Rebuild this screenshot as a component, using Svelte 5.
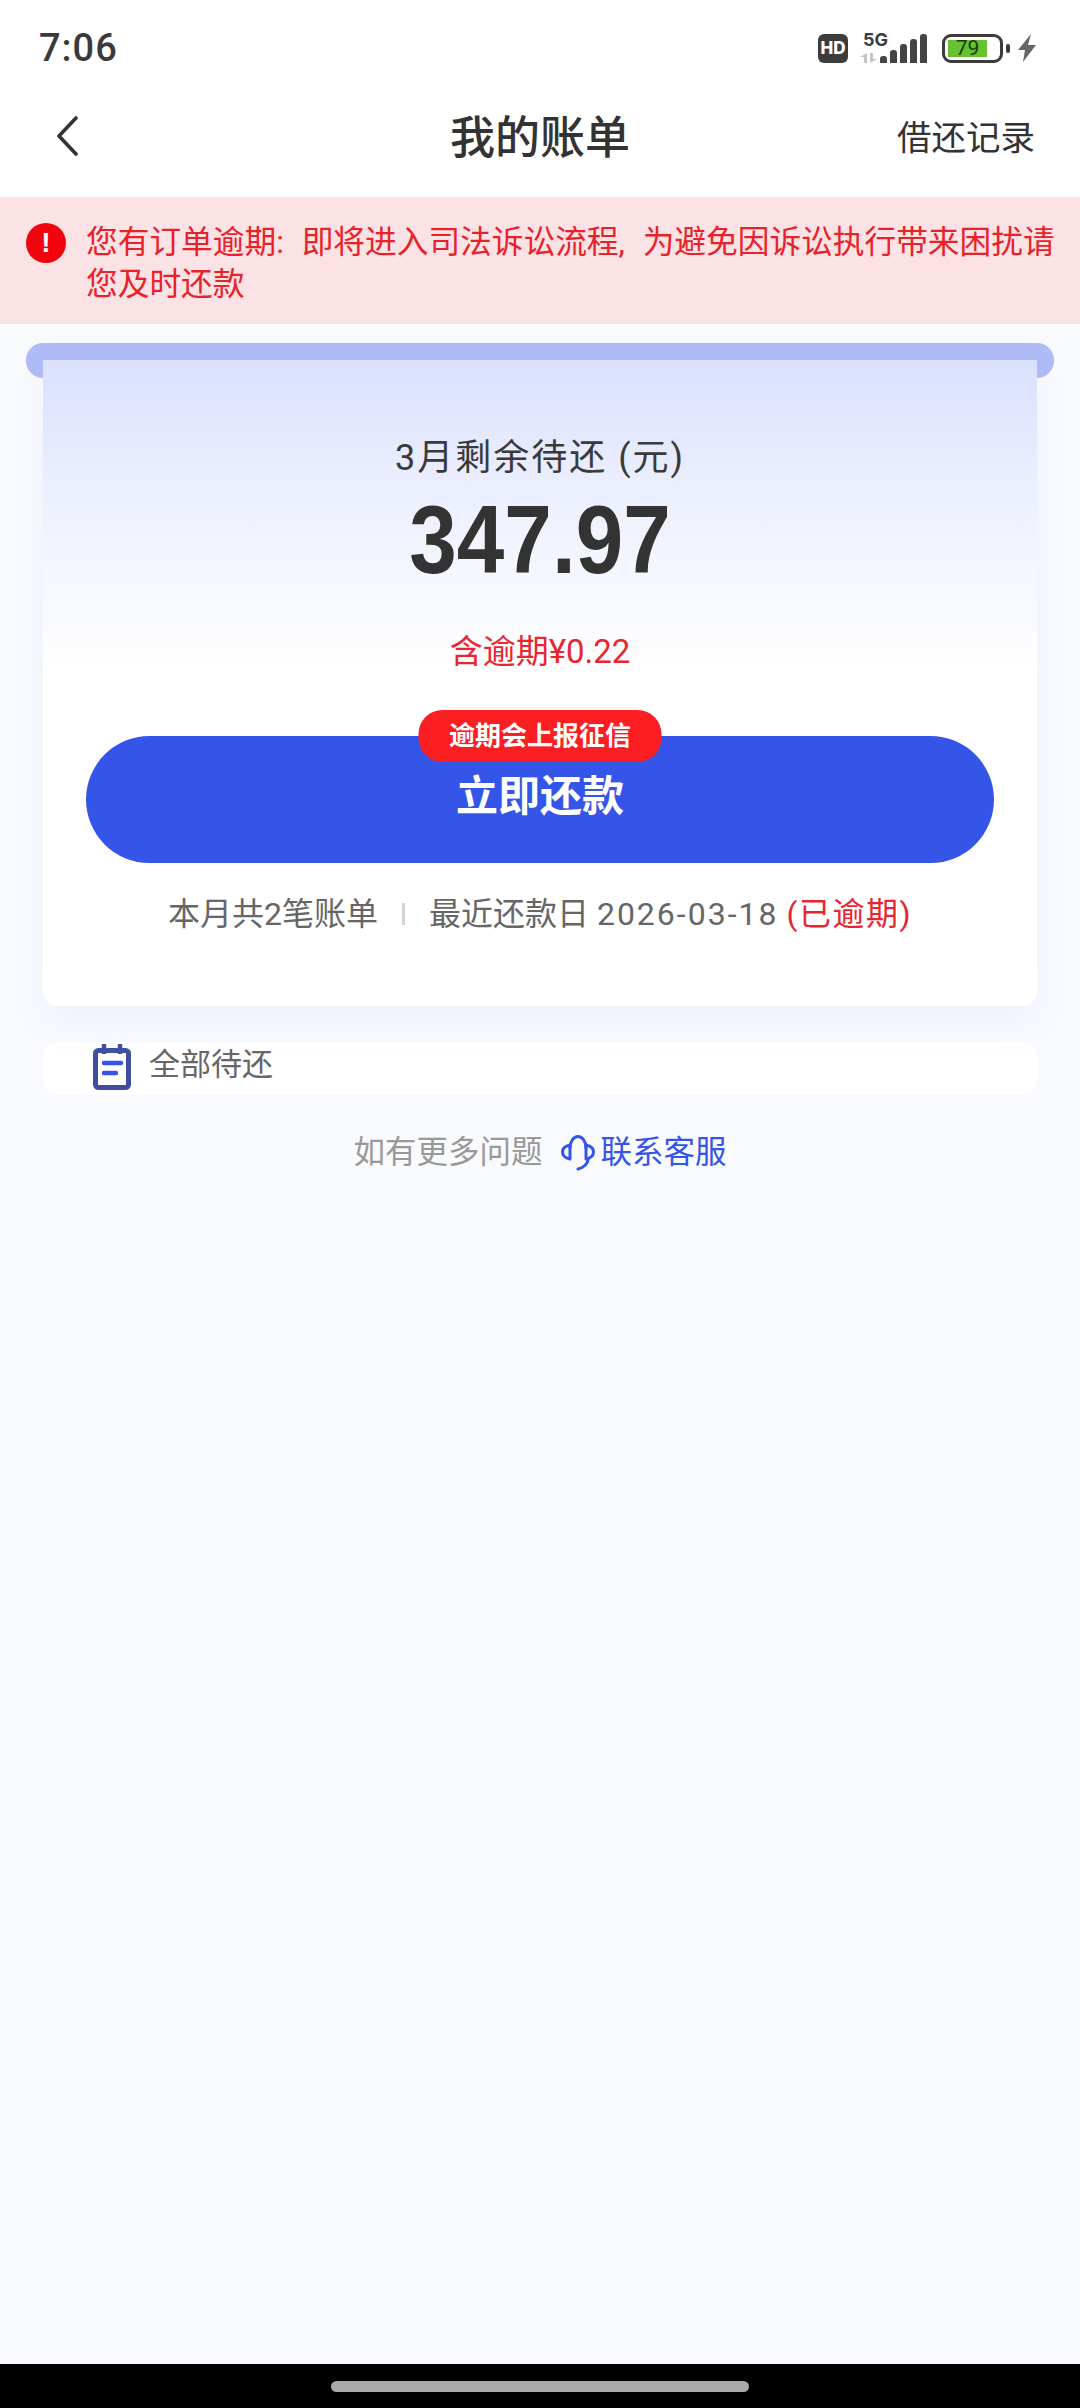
<script lang="ts">
  const bars = [7, 13, 19, 24, 29];
</script>

<div class="page">
  <header class="status">
    <span class="time">7:06</span>
    <div class="status-icons">
      <span class="hd">HD</span>
      <div class="signal">
        <span class="five-g">5G</span>
        <svg class="arrows" width="17" height="10" viewBox="0 0 17 10">
          <path d="M7 0v10H4V4H0zM10 0h3v6h4l-7 4z" fill="#c4c4c4" />
        </svg>
        <div class="bars">
          {#each bars as h}
            <i style="height:{h}px"></i>
          {/each}
        </div>
      </div>
      <div class="battery"><span class="level">79</span></div>
      <i class="battery-cap"></i>
      <svg width="20" height="28" viewBox="0 0 20 28">
        <path d="M14 0 1 16h7L6 28l13-17h-8z" fill="#666" />
      </svg>
    </div>
  </header>

  <nav class="nav">
    <svg class="back" width="24" height="40" viewBox="0 0 24 40">
      <path d="M21 2 4 20l17 18" fill="none" stroke="#333" stroke-width="3.6" stroke-linecap="round" stroke-linejoin="round" />
    </svg>
    <h1>我的账单</h1>
    <a class="records" href="#records">借还记录</a>
  </nav>

  <div class="notice">
    <span class="alert">!</span>
    <p>您有订单逾期: 即将进入司法诉讼流程, 为避免因诉讼执行带来困扰请您及时还款</p>
  </div>

  <main>
    <div class="roller"></div>
    <section class="bill">
      <div class="label">3月剩余待还 (元)</div>
      <div class="amount">347.97</div>
      <div class="overdue">含逾期¥0.22</div>
      <div class="pay-wrap">
        <span class="tag">逾期会上报征信</span>
        <button class="pay">立即还款</button>
      </div>
      <div class="meta">
        <span>本月共2笔账单</span>
        <i class="sep"></i>
        <span>最近还款日 <span class="date">2026-03-18</span></span>
        <span class="late">(已逾期)</span>
      </div>
    </section>

    <section class="pending">
      <svg width="38" height="46" viewBox="0 0 38 46">
        <rect x="2.500" y="6.500" width="33" height="37" rx="3" fill="#fff" stroke="#3c4f9f" stroke-width="5" />
        <path d="M11 0v10M27 0v10" stroke="#3c4f9f" stroke-width="4.500" />
        <path d="M11 19h17M11 29h12" stroke="#3554e8" stroke-width="4.500" stroke-linecap="round" />
      </svg>
      <span>全部待还</span>
    </section>

    <div class="help">
      <span>如有更多问题</span>
      <svg width="34" height="36" viewBox="0 0 34 36">
        <path d="M9 13C9 6 13 1.500 17 1.500S25 6 25 13" fill="none" stroke="#3554e8" stroke-width="3" stroke-linecap="round" />
        <path d="M9 10C4 11 1.500 14 1.500 17S4 23 9 24zM25 10c5 1 7.500 4 7.500 7S30 23 25 24z" fill="none" stroke="#3554e8" stroke-width="3" stroke-linejoin="round" />
        <path d="M27 24c0 5-5 9-10 10" fill="none" stroke="#3554e8" stroke-width="3" stroke-linecap="round" />
      </svg>
      <a href="#service">联系客服</a>
    </div>
  </main>

  <footer class="home"><i></i></footer>
</div>

<style>
  :global(body) {
    margin: 0;
    background: #f9fafe;
  }

  .page {
    display: flex;
    flex-direction: column;
    width: 1080px;
    height: 2408px;
    overflow: hidden;
    font-family: Roboto, "Noto Sans CJK SC", sans-serif;
    color: #333;
    background: #f9fafe;
  }

  .status {
    display: flex;
    justify-content: space-between;
    align-items: center;
    height: 96px;
    padding: 0 43px 0 39px;
    background: #fff;
    box-sizing: border-box;
  }

  .time {
    font-size: 38px;
    font-weight: 500;
    letter-spacing: 1px;
    color: #3a3a3a;
  }

  .status-icons {
    display: flex;
    align-items: center;
  }

  .hd {
    width: 30px;
    height: 29px;
    margin-right: 12px;
    border-radius: 6px;
    background: #3c3c3c;
    color: #fff;
    font: 800 17px/29px Inter, sans-serif;
    text-align: center;
  }

  .signal {
    position: relative;
    width: 67px;
    height: 31px;
    margin-right: 15px;
  }

  .five-g {
    position: absolute;
    left: 3px;
    top: -3px;
    font: 700 18px/20px Inter, sans-serif;
    color: #3c3c3c;
  }

  .arrows {
    position: absolute;
    left: 0;
    bottom: 1px;
  }

  .bars {
    position: absolute;
    right: 0;
    bottom: 1px;
    display: flex;
    align-items: flex-end;
    gap: 3px;
  }

  .bars i {
    width: 7px;
    border-radius: 3px 3px 0 0;
    background: #444;
  }

  .battery {
    width: 61px;
    height: 29px;
    padding: 3px;
    box-sizing: border-box;
    border: 3px solid #3c3c3c;
    border-radius: 9px;
  }

  .level {
    display: block;
    width: 39px;
    height: 17px;
    background: #66c22e;
    color: #163d0c;
    font-size: 21px;
    line-height: 17px;
    text-align: center;
  }

  .battery-cap {
    width: 4px;
    height: 9px;
    margin: 0 7px 0 3px;
    border-radius: 2px;
    background: #3c3c3c;
  }

  .nav {
    position: relative;
    display: flex;
    justify-content: center;
    align-items: center;
    height: 101px;
    padding-bottom: 15px;
    box-sizing: border-box;
    background: #fff;
  }

  .back {
    position: absolute;
    left: 55px;
    top: 20px;
  }

  .nav h1 {
    margin: 0;
    font-size: 45px;
    font-weight: 500;
    line-height: 60px;
  }

  .records {
    position: absolute;
    right: 45px;
    top: 19px;
    font-size: 34.500px;
    line-height: 46px;
    color: #333;
    text-decoration: none;
  }

  .notice {
    display: flex;
    gap: 20px;
    height: 127px;
    padding: 25px 18px 0 26px;
    box-sizing: border-box;
    background: #fbe2e4;
    color: #e8222a;
  }

  .alert {
    flex: none;
    width: 40px;
    height: 40px;
    margin-top: 1px;
    border-radius: 50%;
    background: #f0050f;
    color: #fff;
    font: 700 28px/40px "Liberation Sans", sans-serif;
    text-align: center;
  }

  .notice p {
    margin: 0;
    font-size: 31.700px;
    line-height: 42px;
    word-spacing: 10px;
  }

  main {
    flex: 1;
    padding: 19px 43px 0;
  }

  .roller {
    height: 35px;
    margin: 0 -17px -18px;
    border-radius: 17px;
    background: #aebbf5;
  }

  .bill {
    position: relative;
    height: 646px;
    box-sizing: border-box;
    padding-top: 75px;
    border-radius: 0 0 14px 14px;
    background: linear-gradient(#dbe1fd, #f4f6fe 31%, #fff 48%);
    box-shadow: 0 16px 40px rgba(200, 210, 245, 0.2);
    text-align: center;
  }

  .label {
    font-size: 36px;
    letter-spacing: 2px;
    line-height: 46px;
    color: #3a3a3a;
  }

  .amount {
    margin-top: 4px;
    font: 700 96px/110px "Liberation Sans", sans-serif;
    color: #333;
    transform: scaleX(0.89);
  }

  .overdue {
    margin-top: 36px;
    font-size: 33px;
    line-height: 42px;
    color: #e8262f;
  }

  .pay-wrap {
    position: relative;
    margin: 37px 43px 0;
    padding-top: 26px;
  }

  .tag {
    position: absolute;
    left: 50%;
    top: 0;
    z-index: 1;
    width: 243px;
    height: 52px;
    transform: translateX(-50%);
    border-radius: 24px;
    background: #fb1f24;
    color: #fff;
    font-size: 26px;
    font-weight: 700;
    line-height: 52px;
  }

  .pay {
    display: block;
    width: 100%;
    height: 127px;
    padding: 0 0 14px;
    border: 0;
    border-radius: 64px;
    background: #3554e8;
    color: #fff;
    font-family: inherit;
    font-size: 42px;
    font-weight: 700;
  }

  .meta {
    display: flex;
    justify-content: center;
    align-items: center;
    margin-top: 30px;
    font-size: 32px;
    line-height: 42px;
    color: #666;
  }

  .sep {
    width: 3px;
    height: 22px;
    margin: 0 24px;
    background: #d4d4d4;
  }

  .date {
    letter-spacing: 2px;
  }

  .late {
    margin-left: 8px;
    letter-spacing: 1.500px;
    color: #e8262f;
  }

  .pending {
    display: flex;
    align-items: flex-start;
    gap: 18px;
    height: 52px;
    margin-top: 36px;
    padding-left: 50px;
    border-radius: 14px;
    background: #fff;
    font-size: 31px;
    line-height: 46px;
    color: #666;
  }

  .pending svg {
    margin-top: 2px;
  }

  .help {
    display: flex;
    justify-content: center;
    align-items: center;
    gap: 6px;
    margin-top: 37px;
    font-size: 31.500px;
    line-height: 44px;
    color: #999;
  }

  .help svg {
    margin-left: 12px;
  }

  .help a {
    color: #3554e8;
    text-decoration: none;
  }

  .home {
    display: flex;
    justify-content: center;
    height: 44px;
    padding-top: 17px;
    box-sizing: border-box;
    background: #000;
  }

  .home i {
    width: 418px;
    height: 11px;
    border-radius: 6px;
    background: #aaa;
  }
</style>
